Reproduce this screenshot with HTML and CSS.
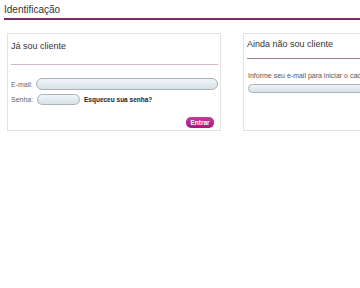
FILE: index.html
```html
<!DOCTYPE html>
<html lang="pt">
<head>
<meta charset="utf-8">
<link rel="stylesheet" href="styles.css">
</head>
<body>
<div class="page">
  <div class="header">Identificação</div>
  <div class="panels">
    <div class="box box-login">
      <div class="box-title">Já sou cliente</div>
      <div class="sep sep-light"></div>
      <div class="row row-email">
        <span class="label">E-mail:</span>
        <span class="input input-email"></span>
      </div>
      <div class="row row-pass">
        <span class="label">Senha:</span>
        <span class="input input-pass"></span>
        <span class="forgot">Esqueceu sua senha?</span>
      </div>
      <div class="actions">
        <span class="btn">Entrar</span>
      </div>
    </div>
    <div class="box box-new">
      <div class="box-title title-new">Ainda não sou cliente</div>
      <div class="sep sep-dark"></div>
      <div class="info">Informe seu e-mail para iniciar o cadastro</div>
      <span class="input input-new"></span>
    </div>
  </div>
</div>
</body>
</html>
```
FILE: styles.css
```css
html, body {
  margin: 0;
  padding: 0;
  background: #fff;
}
body {
  width: 360px;
  height: 288px;
  overflow: hidden;
  font-family: "Liberation Sans", Arial, sans-serif;
  color: #333;
}
.page {
  width: 360px;
}
.header {
  margin-left: 4px;
  padding-top: 4px;
  padding-bottom: 2px;
  line-height: 12px;
  font-size: 10px;
  color: #333;
  border-bottom: 2px solid #7b2a70;
}
.panels {
  display: flex;
  gap: 22px;
  margin-top: 13px;
  margin-left: 7px;
}
.box {
  border: 1px solid #e3e3e3;
  box-sizing: border-box;
  flex: none;
  background: #fff;
}
.box-login {
  width: 214px;
  height: 98px;
  padding: 0 2px 0 3px;
}
.box-new {
  width: 200px;
  height: 98px;
  padding: 0 0 0 3px;
  white-space: nowrap;
  overflow: hidden;
}
.box-title {
  padding-top: 6px;
  line-height: 12px;
  font-size: 9px;
  color: #333;
}
.title-new {
  padding-top: 4px;
}
.sep {
  height: 1px;
}
.sep-light {
  margin-top: 12px;
  background: #d6b6cf;
}
.sep-dark {
  margin-top: 8px;
  background: #a27a9b;
}
.row {
  display: flex;
  align-items: center;
}
.row-email {
  margin-top: 13px;
}
.row-pass {
  margin-top: 4px;
}
.label {
  width: 25px;
  font-size: 7px;
  color: #666;
  flex: none;
}
.input {
  display: block;
  box-sizing: border-box;
  border: 1px solid #a8b2b9;
  border-radius: 6px;
  background: linear-gradient(#f0f4f7, #d6e2e9);
  flex: none;
}
.input-email {
  width: 182px;
  height: 12px;
}
.input-pass {
  width: 43px;
  height: 11px;
  margin-left: 1px;
}
.forgot {
  margin-left: 4px;
  font-size: 6.5px;
  font-weight: bold;
  color: #222;
}
.actions {
  display: flex;
  justify-content: flex-end;
  margin-top: 12px;
  padding-right: 4px;
}
.btn {
  display: block;
  width: 28px;
  height: 11px;
  line-height: 11px;
  text-align: center;
  border-radius: 5px;
  background: linear-gradient(#c43a9e, #a11a80);
  color: #fff;
  font-size: 6.5px;
  font-weight: bold;
}
.info {
  margin-top: 12px;
  line-height: 9px;
  font-size: 7px;
  color: #555;
  padding-left: 1px;
}
.input-new {
  margin-top: 4px;
  margin-left: 1px;
  width: 200px;
  height: 9px;
}
```
